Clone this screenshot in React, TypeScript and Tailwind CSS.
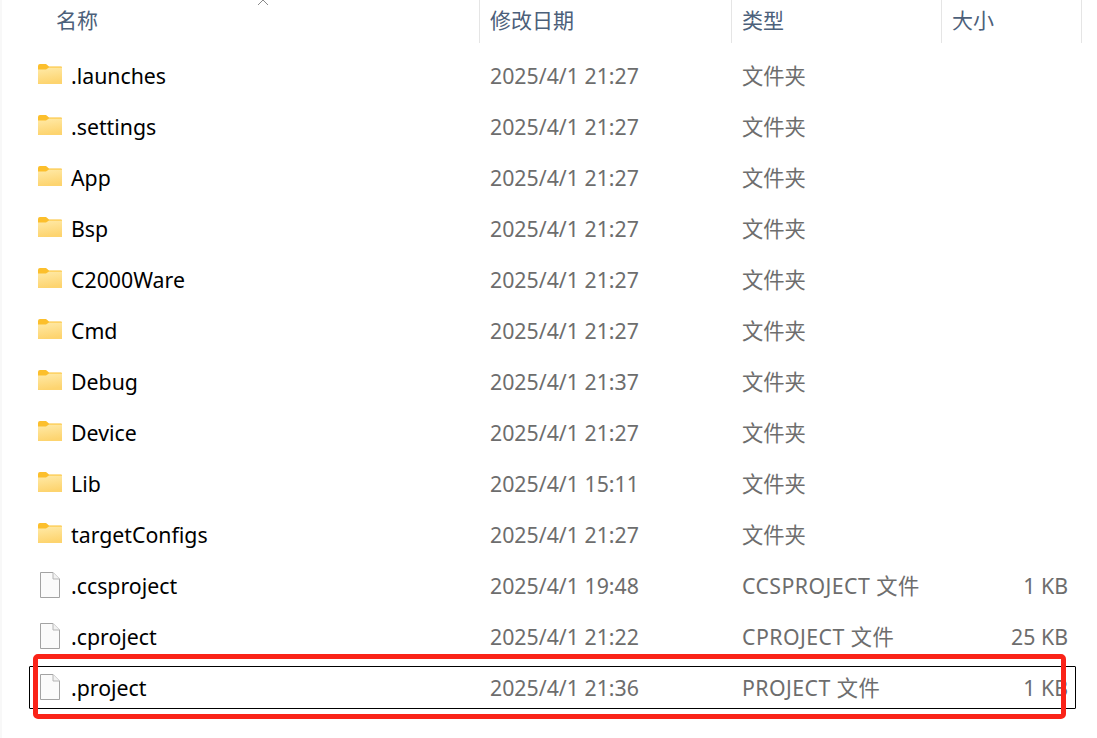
const rows = [
  { name: ".launches", date: "2025/4/1 21:27", type: "文件夹", size: "" },
  { name: ".settings", date: "2025/4/1 21:27", type: "文件夹", size: "" },
  { name: "App", date: "2025/4/1 21:27", type: "文件夹", size: "" },
  { name: "Bsp", date: "2025/4/1 21:27", type: "文件夹", size: "" },
  { name: "C2000Ware", date: "2025/4/1 21:27", type: "文件夹", size: "" },
  { name: "Cmd", date: "2025/4/1 21:27", type: "文件夹", size: "" },
  { name: "Debug", date: "2025/4/1 21:37", type: "文件夹", size: "" },
  { name: "Device", date: "2025/4/1 21:27", type: "文件夹", size: "" },
  { name: "Lib", date: "2025/4/1 15:11", type: "文件夹", size: "" },
  { name: "targetConfigs", date: "2025/4/1 21:27", type: "文件夹", size: "" },
  { name: ".ccsproject", date: "2025/4/1 19:48", type: "CCSPROJECT 文件", size: "1 KB" },
  { name: ".cproject", date: "2025/4/1 21:22", type: "CPROJECT 文件", size: "25 KB" },
  { name: ".project", date: "2025/4/1 21:36", type: "PROJECT 文件", size: "1 KB" },
];

function FolderIcon() {
  return (
    <svg width="24" height="20" viewBox="0 0 24 20" className="mb-[3px] mr-[1px] shrink-0">
      <defs>
        <linearGradient id="folderBody" x1="0" y1="0" x2="0.2" y2="1">
          <stop offset="0" stopColor="#ffeaa8" />
          <stop offset="1" stopColor="#fdd46f" />
        </linearGradient>
      </defs>
      <path d="M0 2a2 2 0 0 1 2-2h6l3 2.500h12a1 1 0 0 1 1 1V19a1 1 0 0 1-1 1H1a1 1 0 0 1-1-1Z" fill="#fcbf2c" />
      <path d="M0 5.500h8l3-2h13V19a1 1 0 0 1-1 1H1a1 1 0 0 1-1-1Z" fill="url(#folderBody)" />
    </svg>
  );
}

function FileIcon() {
  return (
    <svg width="20" height="26" viewBox="0 0 20 26" className="mb-[1px] mr-[1px] shrink-0">
      <path d="M.5 .5h12.500l6.500 6.500v18.500H.5Z" fill="#fbfbfb" stroke="#a3a3a3" />
      <path d="M13 .5v6.500h6.500" fill="#f2f2f2" stroke="#b5b5b5" />
    </svg>
  );
}

function HeaderCell({ label, className }: { label: string; className: string }) {
  return (
    <div className={`flex h-[43px] items-center border-r border-[#e5e5e5] pb-[2px] text-[21px] text-[#4c607a] ${className}`}>
      {label}
    </div>
  );
}

export default function App() {
  return (
    <div
      className="relative h-[738px] w-full overflow-hidden border-l-2 border-[#f8f8f8] bg-white"
      style={{ fontFamily: '"Noto Sans", "Noto Sans CJK SC", sans-serif' }}
    >
      <div className="flex h-[50px] items-start">
        <HeaderCell label="名称" className="w-[478px] pl-[54px]" />
        <HeaderCell label="修改日期" className="w-[252px] pl-[10px]" />
        <HeaderCell label="类型" className="w-[210px] pl-[10px]" />
        <HeaderCell label="大小" className="w-[140px] pl-[10px]" />
      </div>

      {/* 排序箭头 */}
      <svg width="12" height="6" viewBox="0 0 12 6" className="absolute left-[255px] top-0">
        <path d="M1 5 6 0l5 5" fill="none" stroke="#8a8a8a" strokeWidth="1" />
      </svg>

      {rows.map((row, i) => {
        const selected = i === rows.length - 1;
        return (
          <div key={row.name} className="flex h-[51px] items-center">
            <div
              className={`ml-[27px] flex h-[43px] w-[1047px] items-center rounded-[1px] border text-[21.300px] ${
                selected ? "border-black" : "border-transparent"
              }`}
            >
              <div className="flex w-[460px] items-center">
                <div className="flex w-[41px] justify-center">
                  {row.size ? <FileIcon /> : <FolderIcon />}
                </div>
                <span className="text-black">{row.name}</span>
              </div>
              <div className="w-[252px] text-[#6d6d6d]">{row.date}</div>
              <div className={`w-[200px] whitespace-nowrap text-[#6d6d6d] ${row.size ? "tracking-[0.44px]" : ""}`}>
                {row.type}
              </div>
              <div className="w-[126px] text-right text-[#6d6d6d]">{row.size}</div>
            </div>
          </div>
        );
      })}

      {/* 红色标注框 */}
      <div className="absolute left-[31px] top-[654px] h-[65px] w-[1033px] rounded-[5px] border-[5px] border-[#fa2318]" />
    </div>
  );
}
